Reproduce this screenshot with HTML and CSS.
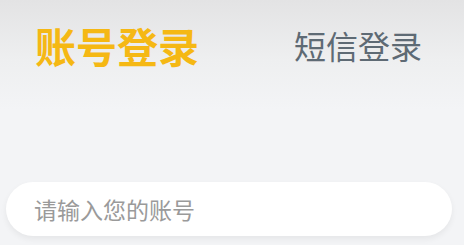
FILE: index.html
```html
<!DOCTYPE html>
<html lang="zh-CN">
<head>
<meta charset="utf-8">
<title>登录</title>
<link rel="stylesheet" href="styles.css">
</head>
<body>
<div class="page">
  <div class="tabs">
    <div class="tab tab-active">账号登录</div>
    <div class="tab">短信登录</div>
  </div>
  <div class="form">
    <div class="field">
      <input class="input" type="text" placeholder="请输入您的账号">
    </div>
  </div>
</div>
</body>
</html>
```
FILE: styles.css
```css
html, body {
  margin: 0;
  padding: 0;
}
body {
  width: 464px;
  height: 245px;
  overflow: hidden;
  font-family: "Noto Sans CJK SC", "Noto Sans", sans-serif;
  background: linear-gradient(to bottom, #e3e3e4 0px, #eeeff0 60px, #f3f4f6 110px, #f3f4f6 245px);
}
.page {
  display: flex;
  flex-direction: column;
}
.tabs {
  display: flex;
  justify-content: space-between;
  align-items: center;
  padding: 19px 42px 0 35px;
  height: 51px;
}
.tab {
  font-size: 32px;
  line-height: 50px;
  color: #5e6a74;
}
.tab-active {
  font-size: 41px;
  font-weight: 700;
  color: #f5b814;
}
.form {
  padding: 112px 12px 0 6px;
}
.field {
  height: 54px;
  border-radius: 27px;
  background: #ffffff;
  box-shadow: 0 3px 6px rgba(0, 0, 0, 0.06);
  display: flex;
  align-items: center;
  padding: 0 28px;
}
.input {
  border: none;
  outline: none;
  background: transparent;
  width: 100%;
  font-family: "Noto Sans CJK SC", "Noto Sans", sans-serif;
  font-size: 23px;
  color: #333;
  padding: 0;
}
.input::placeholder {
  color: #9a9a9a;
}
```
